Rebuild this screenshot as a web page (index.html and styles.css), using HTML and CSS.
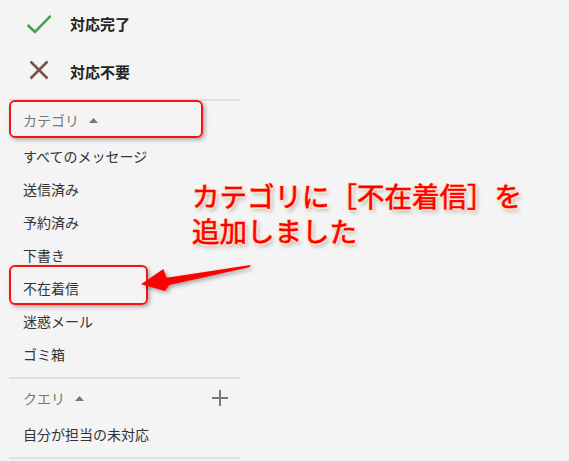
FILE: index.html
```html
<!DOCTYPE html>
<html lang="ja">
<head>
<meta charset="utf-8">
<link rel="stylesheet" href="styles.css">
</head>
<body>
<div class="page">
  <nav class="sidebar">
    <div class="actions">
      <div class="action">
        <svg class="action-icon" width="24" height="24" viewBox="0 0 24 24"><polyline points="0.6,15 8,22 23.7,5.8" fill="none" stroke="#46a046" stroke-width="2.6"/></svg>
        <span class="action-label">対応完了</span>
      </div>
      <div class="action">
        <svg class="action-icon" width="24" height="24" viewBox="0 0 24 24"><path d="M3.5 3.5 L20.5 20.5 M20.5 3.5 L3.5 20.5" fill="none" stroke="#7a5444" stroke-width="2.6"/></svg>
        <span class="action-label">対応不要</span>
      </div>
    </div>
    <hr class="divider">
    <div class="section-head">
      <span>カテゴリ</span>
      <svg class="caret" width="9" height="5" viewBox="0 0 9 5"><polygon points="0,5 4.5,0 9,5" fill="#777"/></svg>
    </div>
    <ul class="items">
      <li>すべてのメッセージ</li>
      <li>送信済み</li>
      <li>予約済み</li>
      <li>下書き</li>
      <li>不在着信</li>
      <li>迷惑メール</li>
      <li>ゴミ箱</li>
    </ul>
    <hr class="divider">
    <div class="section-head">
      <span>クエリ</span>
      <svg class="caret" width="9" height="5" viewBox="0 0 9 5"><polygon points="0,5 4.5,0 9,5" fill="#777"/></svg>
      <svg class="plus" width="16" height="16" viewBox="0 0 16 16"><path d="M8 0 V16 M0 8 H16" stroke="#777" stroke-width="2"/></svg>
    </div>
    <ul class="items">
      <li>自分が担当の未対応</li>
    </ul>
    <hr class="divider">
  </nav>

  <div class="mark mark-category"></div>
  <div class="mark mark-missed"></div>
  <svg class="arrow" width="569" height="461" viewBox="0 0 569 461">
    <polygon points="141,284.3 163.3,269 166.7,277.7 250.7,265 249.3,267.2 169.3,285 165,291" fill="#ff0000"/>
  </svg>
  <p class="note">カテゴリに［不在着信］を<br>追加しました</p>
</div>
</body>
</html>
```
FILE: styles.css
```css
html, body {
  margin: 0;
  padding: 0;
  background: #f4f4f4;
}
.page {
  position: relative;
  width: 569px;
  height: 461px;
  overflow: hidden;
  font-family: "Noto Sans CJK JP", "Noto Sans", sans-serif;
}
.sidebar {
  width: 240px;
  display: flex;
  flex-direction: column;
}
.actions {
  display: flex;
  flex-direction: column;
  gap: 4px;
}
.action {
  height: 44px;
  display: flex;
  align-items: center;
  padding-left: 27px;
}
.action-icon {
  flex: none;
}
.action-label {
  margin-left: 19px;
  padding-top: 2px;
  font-size: 15px;
  font-weight: 700;
  color: #222;
}
.divider {
  border: 0;
  height: 2px;
  background: #dfdfdf;
  margin: 7px 0 0 9px;
  width: 231px;
}
.section-head {
  height: 38px;
  display: flex;
  align-items: center;
  padding-left: 23px;
  padding-right: 12px;
  font-size: 14px;
  color: #777;
}
.caret {
  margin-left: 10px;
}
.plus {
  margin-left: auto;
}
.items {
  list-style: none;
  margin: 0;
  padding: 0;
}
.items li {
  height: 33px;
  display: flex;
  align-items: center;
  padding-left: 23px;
  font-size: 14px;
  color: #333;
}
.mark {
  position: absolute;
  box-sizing: border-box;
  border: 2px solid #ff1010;
  border-radius: 6px;
  box-shadow: 2px 2px 4px rgba(0, 0, 0, 0.3);
}
.mark-category {
  left: 9px;
  top: 100px;
  width: 194px;
  height: 38px;
}
.mark-missed {
  left: 9px;
  top: 265px;
  width: 139px;
  height: 40px;
}
.arrow {
  position: absolute;
  left: 0;
  top: 0;
  filter: drop-shadow(2px 2px 2px rgba(0, 0, 0, 0.35));
}
.note {
  position: absolute;
  left: 192px;
  top: 178px;
  margin: 0;
  font-size: 27.5px;
  line-height: 35px;
  color: #ff0000;
  white-space: nowrap;
  -webkit-text-stroke: 0.6px #ff0000;
  text-shadow:
    -1px -1px 0 #fbe7c6, 1px -1px 0 #fbe7c6, -1px 1px 0 #fbe7c6, 1px 1px 0 #fbe7c6,
    0 -1.5px 0 #fbe7c6, 0 1.5px 0 #fbe7c6, -1.5px 0 0 #fbe7c6, 1.5px 0 0 #fbe7c6,
    2px 3px 4px rgba(0, 0, 0, 0.35);
}
```
